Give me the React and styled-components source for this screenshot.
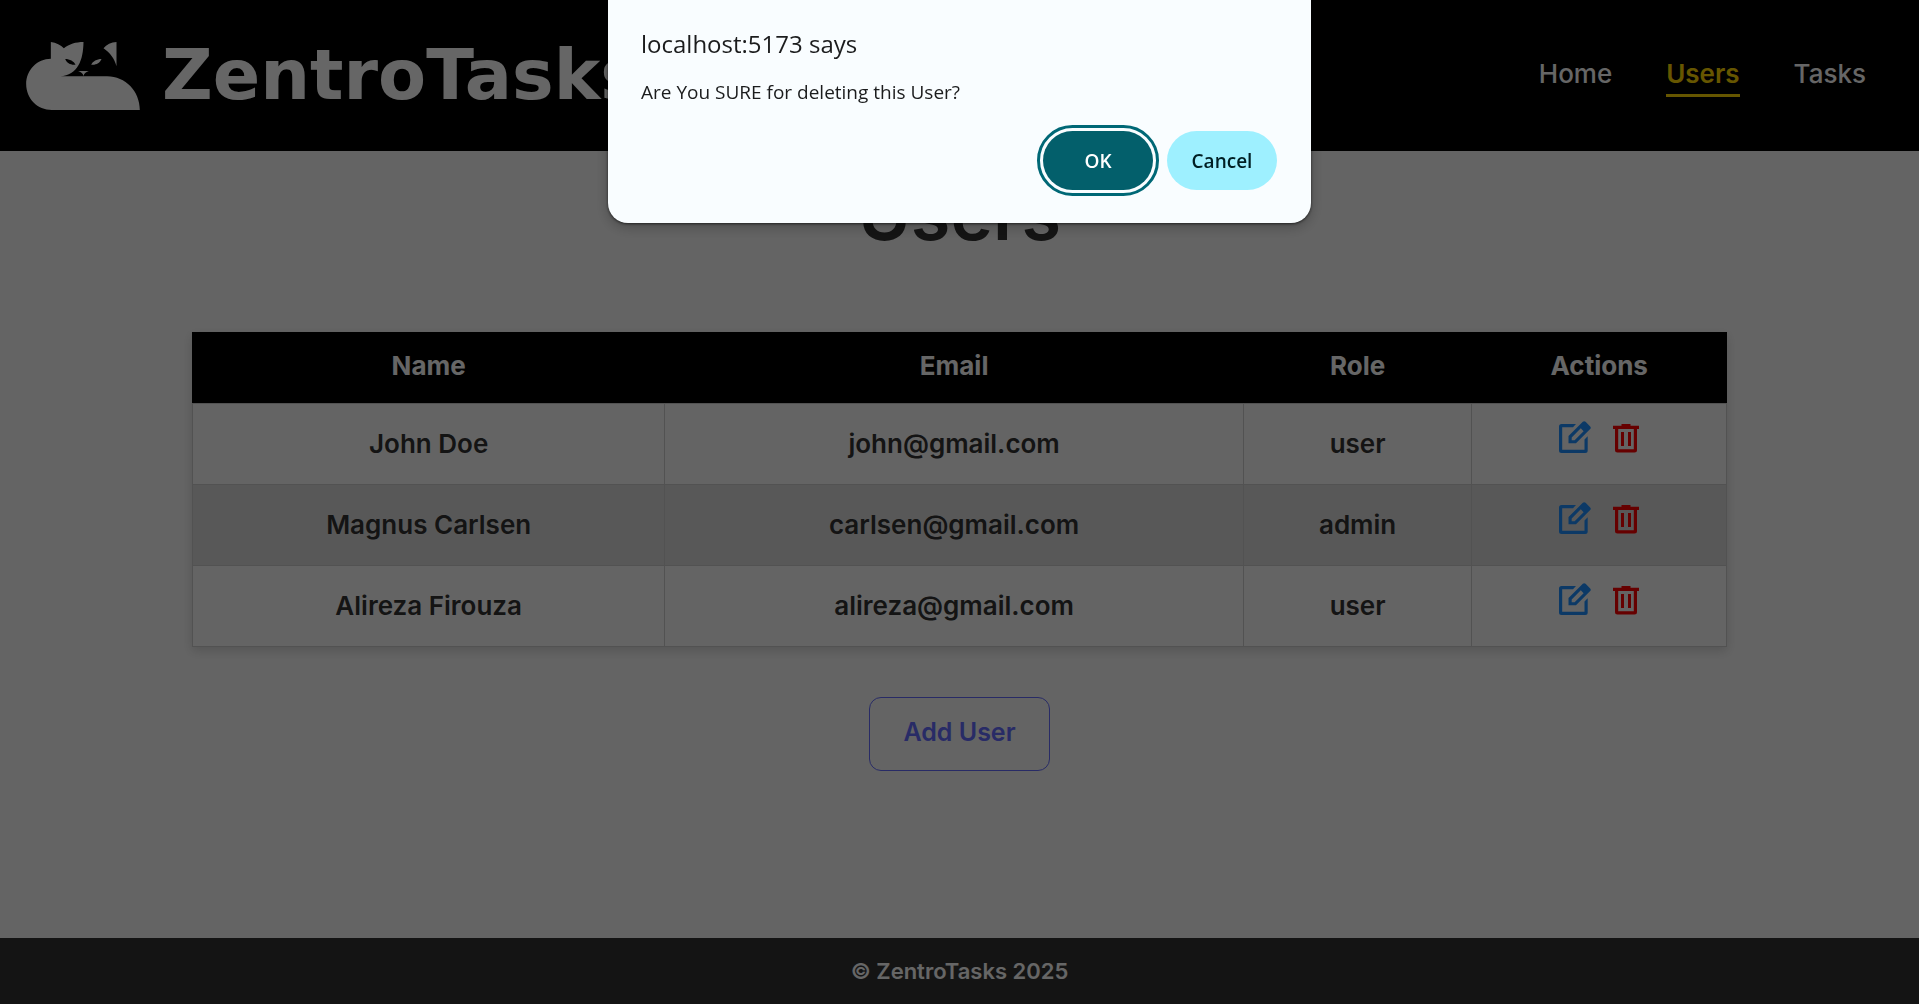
import React from "react";
import styled, { createGlobalStyle } from "styled-components";

const BODY_FONT = `Inter, "Open Sans", sans-serif`;
const DIALOG_FONT = `"Open Sans", "Noto Sans", sans-serif`;

const GlobalStyle = createGlobalStyle`
  * { box-sizing: border-box; }
  body { margin: 0; background: #fff; font-family: ${BODY_FONT}; color: #333; }
`;

const Page = styled.div`
  display: flex;
  flex-direction: column;
  min-height: calc(100vh - 2px);
  background: #fafafa;
`;

const Header = styled.header`
  display: flex;
  align-items: center;
  justify-content: space-between;
  padding: 36px 53px 36px 26px;
  background: #000;
`;

const Brand = styled.a`
  display: flex;
  align-items: center;
  gap: 22px;
  color: #fff;
  text-decoration: none;
  font: 700 70px/79px "DejaVu Sans", sans-serif;
`;

const Nav = styled.nav`
  display: flex;
  align-items: center;
  gap: 54px;
`;

const NavLink = styled.a`
  font-size: 26px;
  line-height: 36px;
  padding: 2px 0;
  text-decoration: none;
  font-weight: ${(p) => (p.$active ? 600 : 500)};
  color: ${(p) => (p.$active ? "#ffd700" : "#fff")};
  border-bottom: 3px solid ${(p) => (p.$active ? "#ffd700" : "transparent")};
`;

const Main = styled.main`
  flex: 1;
  display: flex;
  flex-direction: column;
  align-items: center;
`;

const Title = styled.h1`
  margin: 12px 0 68px;
  font-size: 72px;
  line-height: 101px;
  font-weight: 600;
`;

const Table = styled.table`
  width: 80%;
  table-layout: fixed;
  border-collapse: collapse;
  box-shadow: 0 4px 10px rgba(0, 0, 0, 0.15);
  font-size: 26px;
  line-height: 40px;
  text-align: center;
`;

const Col = styled.col`
  width: ${(p) => p.$share}%;
`;

const HeadCell = styled.th`
  padding: 14px 16px 17px;
  background: #000;
  color: #fff;
  font-weight: 700;
`;

const Row = styled.tr`
  background: ${(p) => (p.$shaded ? "#ddd" : "#fafafa")};
`;

const Cell = styled.td`
  padding: 17px 16px;
  border: 1px solid #ccc;
  font-weight: 600;
`;

const Actions = styled.div`
  display: flex;
  justify-content: center;
  gap: 20px;
  padding-bottom: 12px;
`;

const IconButton = styled.button`
  display: flex;
  padding: 0;
  border: 0;
  background: none;
  color: ${(p) => p.$color};
`;

const AddButton = styled.button`
  margin-top: 50px;
  padding: 15px 33px 18px;
  border: 1px solid #646cff;
  border-radius: 12px;
  background: none;
  color: #646cff;
  font: 600 25px/39px ${BODY_FONT};
`;

const Footer = styled.footer`
  padding: 15px;
  background: #333;
  color: #fff;
  text-align: center;
  font-size: 22px;
  line-height: 36px;
  font-weight: 600;
`;

const Backdrop = styled.div`
  position: fixed;
  inset: 0 0 2px;
  display: flex;
  justify-content: center;
  align-items: flex-start;
  background: rgba(0, 0, 0, 0.6);
`;

const Dialog = styled.div`
  width: 703px;
  padding: 28px 34px 33px 33px;
  border-radius: 0 0 20px 20px;
  background: #f9fdff;
  color: #1b1c1d;
  box-shadow: 0 1px 3px rgba(0, 0, 0, 0.6), 0 4px 14px rgba(0, 0, 0, 0.25);
  font-family: ${DIALOG_FONT};
`;

const DialogTitle = styled.h2`
  margin: 0;
  font-size: 24px;
  line-height: 32px;
  font-weight: 500;
`;

const DialogText = styled.p`
  margin: 18px 0 24px;
  font-size: 19px;
  line-height: 29px;
`;

const DialogButtons = styled.div`
  display: flex;
  justify-content: flex-end;
  gap: 14px;
`;

const DialogButton = styled.button`
  width: 110px;
  height: 59px;
  border: 0;
  border-radius: 30px;
  font: 600 19px/28px ${DIALOG_FONT};
  background: ${(p) => (p.$primary ? "#035f6b" : "#9ef0ff")};
  color: ${(p) => (p.$primary ? "#fff" : "#001f24")};
  outline: ${(p) => (p.$primary ? "3px solid #006876" : "0")};
  outline-offset: 3px;
`;

const FoxLogo = () => (
  <svg width="114" height="68" viewBox="49 36 341 204" fill="currentColor" aria-hidden="true">
    <path d="M123 36C139 38 153 45 162 55C178 42 198 36 221 36C220 92 204 134 151 139H292C347 139 390 184 390 240H126C83 240 49 206 49 162C49 120 82 86 123 86Z" />
    <path d="M320 36V109C314 86 300 68 281 55C290 43 304 37 320 36Z" />
    <path d="M166 87C180 87 192 94 197 104C183 106 171 99 166 87Z" fill="#000" />
    <path d="M275 87C261 87 249 94 244 104C258 106 270 99 275 87Z" />
    <path d="M205 123H237C230 126 223 129 221 138C219 129 212 126 205 123Z" />
  </svg>
);

const EditIcon = () => (
  <svg width="34" height="34" viewBox="0 0 34 34" fill="currentColor" aria-hidden="true">
    <path d="M19 3L16 6.200H5.200V28.800H27.500V18.500L30.700 15.300V29.500Q30.700 32 28.200 32H4.500Q2 32 2 29.500V5.500Q2 3 4.500 3Z" />
    <path fillRule="evenodd" d="M11.500 22.300V15L25.800 .8Q27.200 -.4 28.600 .8L33.200 5.400Q34.400 6.700 33.200 8L19 22.300ZM14.700 19.200H17.600L26.600 10.200L23.800 7.300L14.700 16.400Z" />
  </svg>
);

const TrashIcon = () => (
  <svg width="30" height="34" viewBox="0 0 30 34" fill="currentColor" aria-hidden="true">
    <path d="M10.500 3H19.500V4.700H28V8H2V4.700H10.500Z" />
    <path fillRule="evenodd" d="M4 7H26V29Q26 31.500 23.500 31.500H6.500Q4 31.500 4 29ZM7.200 8V28.200H22.800V8Z" />
    <path d="M10 11H13V25H10ZM17 11H20V25H17Z" />
  </svg>
);

const users = [
  { name: "John Doe", email: "john@gmail.com", role: "user" },
  { name: "Magnus Carlsen", email: "carlsen@gmail.com", role: "admin" },
  { name: "Alireza Firouza", email: "alireza@gmail.com", role: "user" },
];

export default function App() {
  return (
    <>
      <GlobalStyle />
      <Page>
        <Header>
          <Brand href="#home">
            <FoxLogo />
            ZentroTasks
          </Brand>
          <Nav>
            <NavLink href="#home">Home</NavLink>
            <NavLink href="#users" $active aria-current="page">Users</NavLink>
            <NavLink href="#tasks">Tasks</NavLink>
          </Nav>
        </Header>
        <Main>
          <Title>Users</Title>
          <Table>
            <colgroup>
              <Col $share={30.8} />
              <Col $share={37.7} />
              <Col $share={14.9} />
              <Col $share={16.6} />
            </colgroup>
            <thead>
              <tr>
                <HeadCell scope="col">Name</HeadCell>
                <HeadCell scope="col">Email</HeadCell>
                <HeadCell scope="col">Role</HeadCell>
                <HeadCell scope="col">Actions</HeadCell>
              </tr>
            </thead>
            <tbody>
              {users.map((user, i) => (
                <Row key={user.email} $shaded={i % 2 === 1}>
                  <Cell>{user.name}</Cell>
                  <Cell>{user.email}</Cell>
                  <Cell>{user.role}</Cell>
                  <Cell>
                    <Actions>
                      <IconButton $color="#1e90ff" aria-label={`Edit ${user.name}`}><EditIcon /></IconButton>
                      <IconButton $color="#f00" aria-label={`Delete ${user.name}`}><TrashIcon /></IconButton>
                    </Actions>
                  </Cell>
                </Row>
              ))}
            </tbody>
          </Table>
          <AddButton>Add User</AddButton>
        </Main>
        <Footer>© ZentroTasks 2025</Footer>
      </Page>
      <Backdrop>
        <Dialog role="alertdialog" aria-modal="true" aria-labelledby="confirm-title" aria-describedby="confirm-text">
          <DialogTitle id="confirm-title">localhost:5173 says</DialogTitle>
          <DialogText id="confirm-text">Are You SURE for deleting this User?</DialogText>
          <DialogButtons>
            <DialogButton $primary>OK</DialogButton>
            <DialogButton>Cancel</DialogButton>
          </DialogButtons>
        </Dialog>
      </Backdrop>
    </>
  );
}
